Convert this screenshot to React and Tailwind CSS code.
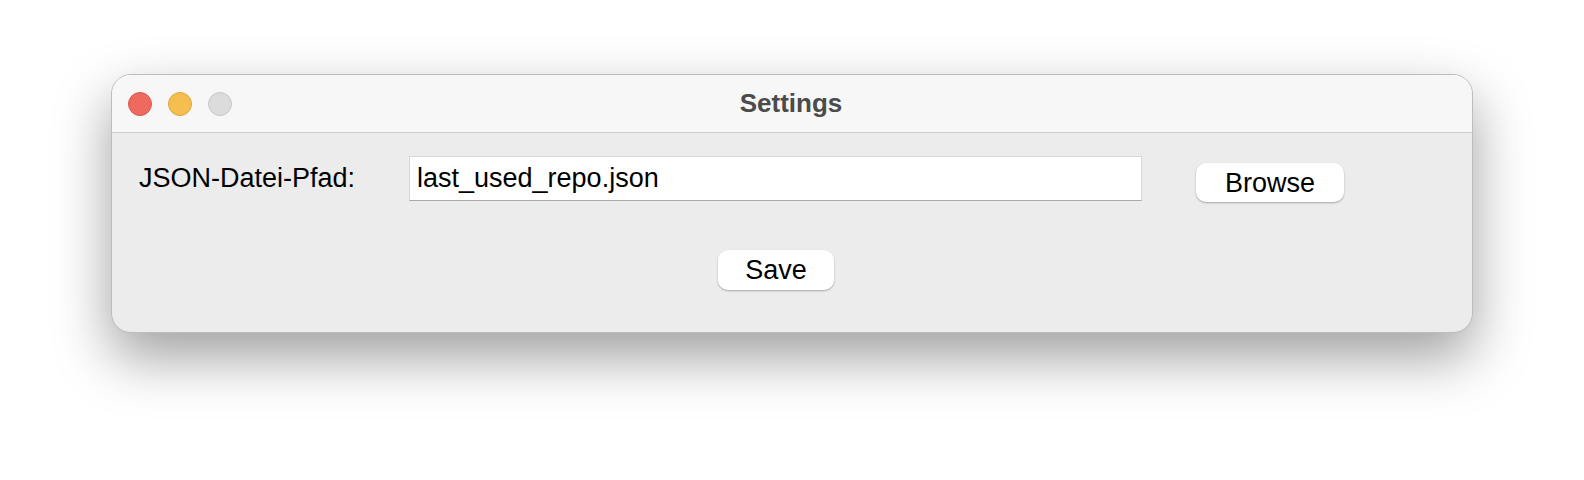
import React from 'react';

const font = { fontFamily: '"Liberation Sans", Arial, sans-serif' };

const Light = ({ className }) => (
  <span className={`block h-[24px] w-[24px] rounded-full border ${className}`} />
);

const App = () => {
  return (
    <div className="min-h-[480px] w-[1584px] bg-white pl-[111px] pt-[74px]" style={font}>
      <div className="w-[1362px] h-[259px] rounded-[20px] border border-[#bdbdbd] bg-[#ececec] overflow-hidden shadow-[0_24px_56px_rgba(0,0,0,0.38)]">
        {/* title bar */}
        <div className="relative flex h-[58px] items-center border-b border-[#d0d0d0] bg-[#f7f7f7] pl-[16px]">
          <div className="flex gap-[16px]">
            <Light className="bg-[#ee6a5f] border-[#d9574c]" />
            <Light className="bg-[#f5bf4f] border-[#dba63e]" />
            <Light className="bg-[#dcdcdc] border-[#c6c6c6]" />
          </div>
          <div className="absolute inset-0 flex items-center justify-center pr-[2px] text-[26px] font-bold text-[#4b4b4b]">
            Settings
          </div>
        </div>

        {/* body */}
        <div className="pt-[23px]">
          <div className="flex items-start">
            <label className="ml-[27px] flex h-[45px] w-[270px] items-center text-[27px] text-black">JSON-Datei-Pfad:</label>
            <div className="flex h-[45px] w-[733px] items-center border border-[#d8d8d8] border-b-[#a9a9a9] bg-white pl-[7px] text-[27px] text-black">
              last_used_repo.json
            </div>
            <button className="ml-[54px] mt-[7px] h-[39px] w-[148px] rounded-[10px] bg-white text-[27px] text-black shadow-[0_1px_2px_rgba(0,0,0,0.3)]">
              Browse
            </button>
          </div>
          <div className="mt-[48px] pl-[606px]">
            <button className="h-[40px] w-[116px] rounded-[10px] bg-white text-[27px] text-black shadow-[0_1px_2px_rgba(0,0,0,0.3)]">
              Save
            </button>
          </div>
        </div>
      </div>
    </div>
  );
};

export default App;
